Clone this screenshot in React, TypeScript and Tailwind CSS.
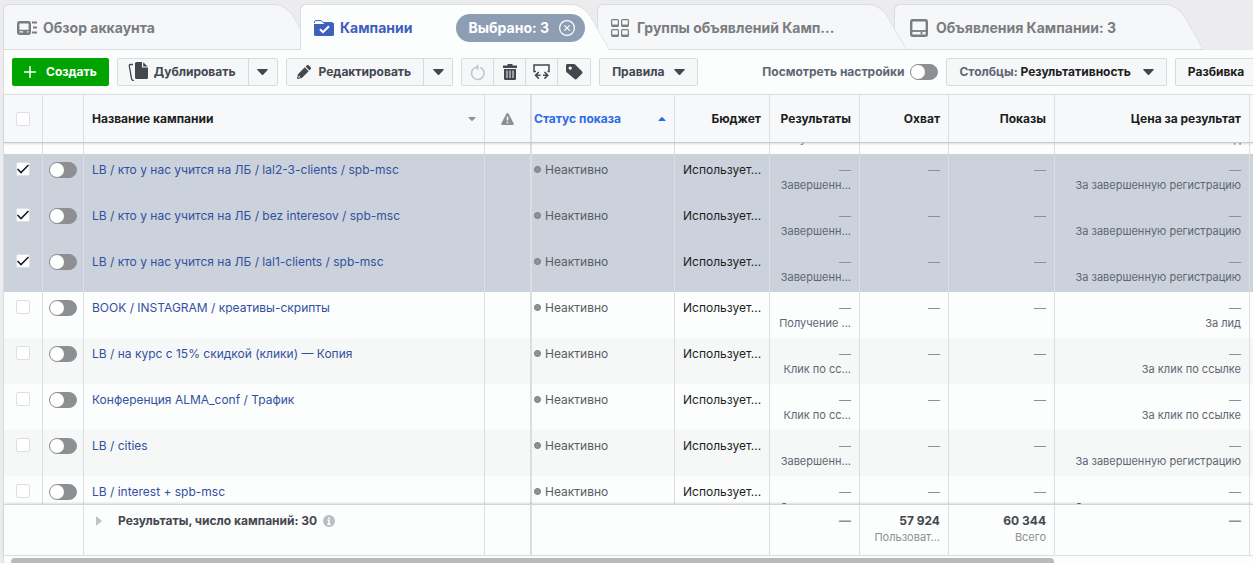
import { ReactNode, useEffect, useRef, useState } from "react";
import clsx from "clsx";

type Campaign = {
  id: number;
  name?: string;
  result: string;
  price: string;
};

const campaigns: Campaign[] = [
  { id: 1, result: "Получение ...", price: "За лид" },
  { id: 2, name: "LB / кто у нас учится на ЛБ / lal2-3-clients / spb-msc", result: "Завершенн...", price: "За завершенную регистрацию" },
  { id: 3, name: "LB / кто у нас учится на ЛБ / bez interesov / spb-msc", result: "Завершенн...", price: "За завершенную регистрацию" },
  { id: 4, name: "LB / кто у нас учится на ЛБ / lal1-clients / spb-msc", result: "Завершенн...", price: "За завершенную регистрацию" },
  { id: 5, name: "BOOK / INSTAGRAM / креативы-скрипты", result: "Получение ...", price: "За лид" },
  { id: 6, name: "LB / на курс с 15% скидкой (клики) — Копия", result: "Клик по сс...", price: "За клик по ссылке" },
  { id: 7, name: "Конференция ALMA_conf / Трафик", result: "Клик по сс...", price: "За клик по ссылке" },
  { id: 8, name: "LB / cities", result: "Завершенн...", price: "За завершенную регистрацию" },
  { id: 9, name: "LB / interest + spb-msc", result: "Завершенн...", price: "За завершенную регистрацию" },
];

/* ---------- icons ---------- */

const OverviewIcon = () => (
  <svg width="20" height="16" viewBox="0 0 20 16" fill="none" stroke="#7a7c7f" aria-hidden="true">
    <rect x="1.2" y="2.2" width="11.6" height="11.6" rx="1.5" strokeWidth="2.4" />
    <path d="M2 10.5h10M7 10.5v1.6h3" strokeWidth="1.6" />
    <path d="M15 2.500h5M16 7.500h4M15 12.500h5" strokeWidth="2" />
  </svg>
);

const FolderIcon = () => (
  <svg width="20" height="16" viewBox="0 0 20 16" aria-hidden="true">
    <path d="M.5 3V1.800C.5 1 1 .6 1.700.6h5.600L9 2.600h8.500c.6 0 1 .4 1 1" fill="none" stroke="#3f5fbc" />
    <path d="M0 4h9.500l1.200-1.500H18.500A1.500 1.500 0 0 1 20 4v10.500a1.500 1.500 0 0 1-1.500 1.500h-17A1.500 1.500 0 0 1 0 14.500z" fill="#3f5fbc" />
    <path d="M6 9.200l3 3 6-6" fill="none" stroke="#fff" strokeWidth="2" />
  </svg>
);

const GroupsIcon = () => (
  <svg width="18" height="18" viewBox="0 0 18 18" fill="none" stroke="#7a7c7f" className="mr-0.5" aria-hidden="true">
    {["0 0", "10 0", "0 10", "10 10"].map((pos) => (
      <g key={pos} transform={`translate(${pos})`}>
        <rect x=".6" y=".6" width="6.800" height="6.800" rx="1" strokeWidth="1.200" />
        <path d="M1 6.500h6" strokeWidth="1.800" />
      </g>
    ))}
  </svg>
);

const AdsIcon = () => (
  <svg width="18" height="18" viewBox="0 0 18 18" fill="none" stroke="#7a7c7f" className="mr-0.5" aria-hidden="true">
    <rect x="1.200" y="1.200" width="15.600" height="15.600" rx="1.500" strokeWidth="2.400" />
    <path d="M2 12h14" strokeWidth="1.800" />
    <path d="M11.500 13v2.500" strokeWidth="1.800" />
  </svg>
);

const CopyIcon = () => (
  <svg width="20" height="20" viewBox="0 0 20 20" fill="#43474e" aria-hidden="true">
    <path d="M5 2.500H2.500c-1 0-1.400.5-1.200 1.400l2.300 13.200c.2.900.6 1.200 1.400 1.200h1" fill="none" stroke="#43474e" strokeWidth="1.300" />
    <path d="M8.500 0H14v5.500h6v10a1.500 1.500 0 0 1-1.500 1.500h-10A1.500 1.500 0 0 1 7 15.500v-14A1.500 1.500 0 0 1 8.500 0z" />
    <path d="M15.200.2l4.500 4.300h-4.500z" />
  </svg>
);

const PencilIcon = () => (
  <svg width="14" height="14" viewBox="0 0 14 14" fill="#43474e" aria-hidden="true">
    <path
      fillRule="evenodd"
      d="M0 14l.9-4.800 6.900-6.900 3.900 3.900-6.900 6.900zM1.800 10.400l-.4 2.200 2.200-.4z"
    />
    <path d="M8.600 1.500L9.700.5c.7-.7 1.600-.7 2.300 0l1.500 1.500c.7.700.7 1.600 0 2.300l-1 1.100z" />
  </svg>
);

const ReloadIcon = () => (
  <svg width="16" height="17" viewBox="0 0 16 17" fill="none" stroke="#c3c6cb" aria-hidden="true">
    <path d="M4.800 3.600a6.300 6.300 0 1 0 5.600-.2" strokeWidth="1.600" />
    <path d="M8.500.3v6L4.500 3.300z" fill="#c3c6cb" stroke="none" />
  </svg>
);

const TrashIcon = () => (
  <svg width="14" height="16" viewBox="0 0 14 16" fill="#43474e" aria-hidden="true">
    <path d="M4.500 0h5v1.500H14V4H0V1.500h4.500z" />
    <path d="M1 5h12v9.500a1.500 1.500 0 0 1-1.500 1.500h-9A1.500 1.500 0 0 1 1 14.500z" />
    <path d="M4 6.500v7.500M7 6.500v7.500M10 6.500v7.500" stroke="#f5f6f7" />
  </svg>
);

const SwapIcon = () => (
  <svg width="17" height="16" viewBox="0 0 17 16" fill="none" stroke="#43474e" strokeWidth="1.500" aria-hidden="true">
    <path d="M3 7.500H1V1h15v6.500h-1.500" />
    <path d="M7.500 11.300H2.800M5.800 8l-3.300 3.300 3.300 3.300M10 11.300h4.700M11.500 8l3.300 3.300-3.300 3.300" />
  </svg>
);

const TagIcon = () => (
  <svg width="17" height="16" viewBox="0 0 17 16" fill="#43474e" aria-hidden="true">
    <path
      fillRule="evenodd"
      d="M1.500 0h6.300c.6 0 1 .2 1.400.5l6.700 6.700c.8.800.8 1.800 0 2.600l-5 5c-.8.800-1.800.8-2.600 0L.600 8.300C.200 7.900 0 7.500 0 6.900V1.500C0 .7.700 0 1.500 0zm2.700 2.400a1.700 1.700 0 1 0 0 3.400 1.700 1.700 0 0 0 0-3.400z"
    />
  </svg>
);

const WarningIcon = () => (
  <svg width="13" height="12" viewBox="0 0 13 12" aria-hidden="true">
    <path d="M5.500.6c.5-.8 1.500-.8 2 0l5.200 9.900c.4.800 0 1.500-.9 1.500H1.200c-.9 0-1.300-.7-.9-1.500z" fill="#8b8f94" />
    <path d="M6.500 3.500v4M6.500 8.700v1.500" stroke="#f5f7f8" strokeWidth="1.500" />
  </svg>
);

const Caret = ({ className }: { className?: string }) => (
  <svg width="11" height="6" viewBox="0 0 11 6" className={className} fill="currentColor" aria-hidden="true">
    <path d="M.8 0h9.400c.7 0 .9.500.4 1L6.200 5.700c-.4.4-1 .4-1.400 0L.4 1C-.1.500.1 0 .8 0z" />
  </svg>
);

/* ---------- controls ---------- */

function CheckBox({ label, checked, onChange }: { label: string; checked: boolean; onChange: () => void }) {
  return (
    <label className="relative mx-auto block size-3.5">
      <input
        type="checkbox"
        aria-label={label}
        checked={checked}
        onChange={onChange}
        className="peer block size-3.5 appearance-none rounded-xs border border-[#dcdfe6] bg-white"
      />
      <svg
        width="14"
        height="14"
        viewBox="0 0 14 14"
        className="pointer-events-none absolute inset-0 hidden peer-checked:block"
        aria-hidden="true"
      >
        <path d="M1.500 7l3.500 3.500 7.500-7.500" fill="none" stroke="#1c1e21" strokeWidth="1.600" />
      </svg>
    </label>
  );
}

function Toggle({ label, id }: { label?: string; id?: string }) {
  const [on, setOn] = useState<boolean>(false);
  return (
    <input
      type="checkbox"
      role="switch"
      id={id}
      aria-label={label}
      checked={on}
      onChange={() => setOn(!on)}
      className="block h-4 w-7 shrink-0 appearance-none rounded-full border border-[#8d8f92] bg-[#8d8f92] before:block before:size-3.5 before:rounded-full before:bg-white checked:bg-[#3f5fbc] checked:before:ml-3"
    />
  );
}

function ToolButton({ children, className, label }: { children: ReactNode; className?: string; label?: string }) {
  return (
    <button
      type="button"
      aria-label={label}
      className={clsx("flex h-7 shrink-0 items-center justify-center whitespace-nowrap bg-[#f6f7f8]", className)}
    >
      {children}
    </button>
  );
}

function ButtonGroup({ children }: { children: ReactNode }) {
  return (
    <div className="flex shrink-0 divide-x divide-[#d9dbe0] overflow-hidden rounded-xs border border-[#d9dbe0] *:h-[26px]">
      {children}
    </div>
  );
}

function Tab({
  icon,
  title,
  active,
  className,
  children,
}: {
  icon: ReactNode;
  title: string;
  active?: boolean;
  className?: string;
  children?: ReactNode;
}) {
  const surface = active ? "bg-[#fcfdfd]" : "bg-[#f5f7f8] border-b";
  return (
    <div className={clsx("relative flex h-[46px] w-[297px] shrink-0 items-center pt-0.5", className)}>
      <span className={clsx("absolute inset-y-0 right-6 left-0 rounded-tl-md border-t border-l border-[#d9dce0]", surface)} />
      <span className={clsx("absolute inset-y-0 right-0 w-12 skew-x-[30deg] rounded-tr-xl border-t border-r border-[#d9dce0]", surface)} />
      {/* hides the joint between the straight and the slanted part */}
      <span className={clsx("absolute inset-y-0 right-6 w-12 border-t border-[#d9dce0]", surface)} />
      <button
        type="button"
        role="tab"
        aria-selected={!!active}
        className={clsx(
          "relative flex items-center gap-1.5 pl-3.5 text-sm font-bold whitespace-nowrap",
          active ? "text-[#3f5fbc]" : "text-[#7a7c7f]"
        )}
      >
        {icon}
        {title}
      </button>
      {children}
    </div>
  );
}

/* ---------- table ---------- */

const table = "w-full table-fixed border-separate border-spacing-0";
const cell = "border-r border-[#dcdee1] px-2";
const head = "border-y border-t-[#dcdee1] border-b-[#c6c9cd] bg-[#f6f8f9] font-bold";
const foot = "border-y border-t-[#d3d3d6]";

// header, body and totals are separate tables, so they share the same columns
const Columns = () => (
  <colgroup>
    <col className="w-[39px]" />
    <col className="w-[41px]" />
    <col />
    <col className="w-[47px]" />
    <col className="w-[143px]" />
    <col className="w-[95px]" />
    <col className="w-[90px]" />
    <col className="w-[89px]" />
    <col className="w-[106px]" />
    <col className="w-[195px]" />
    <col className="w-[3px]" />
  </colgroup>
);

const Dash = () => <span className="text-[#8d9196]">—</span>;

function Row({
  campaign: { name, result, price },
  striped,
  checked,
  onToggle,
}: {
  campaign: Campaign;
  striped: boolean;
  checked: boolean;
  onToggle: () => void;
}) {
  const loaded = !!name;
  return (
    <tr
      className={clsx(
        "h-[46px] text-right align-top leading-4 *:pt-2",
        checked ? "bg-[#cbd2dc]" : striped ? "bg-[#f6f8f8]" : "bg-[#fcfdfd]"
      )}
    >
      <td className={cell}>{loaded && <CheckBox label={name} checked={checked} onChange={onToggle} />}</td>
      <td className="border-r border-[#dcdee1] pl-1.5">{loaded && <Toggle label={name} />}</td>
      <td className={clsx(cell, "truncate text-left")}>
        {loaded && (
          <a href="#" className="text-[#33509f]">
            {name}
          </a>
        )}
      </td>
      <td className={clsx(cell, "border-r-2")} />
      <td className={clsx(cell, "pl-0.5 text-left text-[#5a5d61]")}>
        {loaded && (
          <>
            <span className="mr-1 inline-block size-[7px] rounded-full border border-[#77797c] bg-[#929294] align-[1px]" />
            Неактивно
          </>
        )}
      </td>
      <td className={cell}>{loaded && "Использует..."}</td>
      <td className={cell}>
        <div className="h-4">{loaded && <Dash />}</div>
        <div className="text-[11px] leading-3.5 text-[#5f6672]">{result}</div>
      </td>
      <td className={cell}>{loaded && <Dash />}</td>
      <td className={cell}>{loaded && <Dash />}</td>
      <td className={cell}>
        <div className="h-4">{loaded && <Dash />}</div>
        <div className="text-[11px] leading-3.5 text-[#5f6672]">{price}</div>
      </td>
      <td />
    </tr>
  );
}

export default function App() {
  const [selected, setSelected] = useState<number[]>([2, 3, 4]);
  const scrollRef = useRef<HTMLDivElement>(null);

  useEffect(() => {
    scrollRef.current!.scrollTop = 35;
  }, []);

  const toggleRow = (id: number) =>
    setSelected((prev) => (prev.includes(id) ? prev.filter((item) => item !== id) : [...prev, id]));

  const toggleAll = () => setSelected((prev) => (prev.length === campaigns.length ? [] : campaigns.map((c) => c.id)));

  return (
    <div className="flex h-screen flex-col overflow-hidden bg-[#ececee] pl-[3px] font-['Inter','Liberation_Sans',sans-serif] text-xs text-[#1c1e21]">
      <div role="tablist" className="flex pt-1">
        <Tab icon={<OverviewIcon />} title="Обзор аккаунта" />
        <Tab icon={<FolderIcon />} title="Кампании" active className="z-30">
          <div className="relative mr-3 ml-auto flex h-7 items-center gap-2.5 rounded-full bg-[#8c9db4] pr-2.5 pl-3 text-sm font-bold text-white">
            <span>Выбрано: {selected.length}</span>
            <button type="button" aria-label="Сбросить выбор" onClick={() => setSelected([])}>
              <svg width="16" height="16" viewBox="0 0 16 16" fill="none" stroke="#fff" aria-hidden="true">
                <circle cx="8" cy="8" r="7.400" strokeWidth="1.200" />
                <path d="M5.300 5.300l5.400 5.400M10.700 5.300l-5.400 5.400" strokeWidth="1.200" />
              </svg>
            </button>
          </div>
        </Tab>
        <Tab icon={<GroupsIcon />} title="Группы объявлений Камп..." className="z-20" />
        <Tab icon={<AdsIcon />} title="Объявления Кампании: 3" className="z-10 pl-0.5" />
      </div>

      <div className="flex min-h-0 flex-1 flex-col border-l border-[#d9dce0] bg-[#fcfdfd]">
        <div className="flex gap-2 overflow-hidden py-2 pl-2 font-bold text-[#43474e]">
          <button type="button" className="flex h-7 shrink-0 items-center gap-2.5 rounded-xs bg-[#00a400] px-3 text-white">
            <svg width="12" height="12" viewBox="0 0 12 12" stroke="#fff" strokeWidth="1.500" aria-hidden="true">
              <path d="M6 0v12M0 6h12" />
            </svg>
            Создать
          </button>
          <ButtonGroup>
            <ToolButton className="gap-1.5 pr-3 pl-2.5">
              <CopyIcon />
              Дублировать
            </ToolButton>
            <ToolButton className="w-7" label="Другие варианты дублирования">
              <Caret />
            </ToolButton>
          </ButtonGroup>
          <ButtonGroup>
            <ToolButton className="gap-2 pr-3 pl-2.5">
              <PencilIcon />
              Редактировать
            </ToolButton>
            <ToolButton className="w-7" label="Другие варианты редактирования">
              <Caret />
            </ToolButton>
          </ButtonGroup>
          <ButtonGroup>
            <ToolButton className="w-8" label="Отменить">
              <ReloadIcon />
            </ToolButton>
            <ToolButton className="w-8" label="Удалить">
              <TrashIcon />
            </ToolButton>
            <ToolButton className="w-8" label="A/B-тест">
              <SwapIcon />
            </ToolButton>
            <ToolButton className="w-8" label="Метки">
              <TagIcon />
            </ToolButton>
          </ButtonGroup>
          <ToolButton className="gap-2.5 rounded-xs border border-[#d9dbe0] px-3">
            Правила
            <Caret />
          </ToolButton>
          <div className="ml-14 flex shrink-0 items-center gap-1.5">
            <label htmlFor="view-settings" className="whitespace-nowrap text-[#5f6672]">
              Посмотреть настройки
            </label>
            <Toggle id="view-settings" />
          </div>
          <ToolButton className="gap-3 rounded-xs border border-[#d9dbe0] px-3">
            <span>
              <span className="text-[#5f6672]">Столбцы:</span> <span className="text-[#1c1e21]">Результативность</span>
            </span>
            <Caret />
          </ToolButton>
          <ToolButton className="gap-3 rounded-xs border border-[#d9dbe0] px-3 text-[#1c1e21]">
            Разбивка
            <Caret />
          </ToolButton>
        </div>

        <table className={clsx(table, "relative z-10 shadow-[0_1px_2px_rgba(0,0,0,0.12)]")}>
          <Columns />
          <thead>
            <tr className="h-[49px] text-right">
              <th className={clsx(cell, head)}>
                <CheckBox label="Выбрать все" checked={selected.length === campaigns.length} onChange={toggleAll} />
              </th>
              <th className={clsx(cell, head)} aria-label="Вкл./выкл." />
              <th className={clsx(cell, head)}>
                <div className="flex items-center justify-between">
                  Название кампании
                  <Caret className="h-1 w-2 text-[#8d9196]" />
                </div>
              </th>
              <th className={clsx(cell, head, "border-r-2")} aria-label="Предупреждения">
                <div className="flex justify-center">
                  <WarningIcon />
                </div>
              </th>
              <th className={clsx(cell, head, "pl-0.5 text-[#2b6be8]")}>
                <div className="flex items-center justify-between">
                  Статус показа
                  <Caret className="h-1 w-2 rotate-180" />
                </div>
              </th>
              <th className={clsx(cell, head)}>Бюджет</th>
              <th className={clsx(cell, head)}>Результаты</th>
              <th className={clsx(cell, head)}>Охват</th>
              <th className={clsx(cell, head)}>Показы</th>
              <th className={clsx(cell, head)}>Цена за результат</th>
              <td className={head} />
            </tr>
          </thead>
        </table>

        <div ref={scrollRef} className="min-h-0 flex-1 overflow-hidden">
          <table className={table}>
            <Columns />
            <tbody>
              {campaigns.map((campaign, index) => (
                <Row
                  key={campaign.id}
                  campaign={campaign}
                  striped={index % 2 === 1}
                  checked={selected.includes(campaign.id)}
                  onToggle={() => toggleRow(campaign.id)}
                />
              ))}
            </tbody>
          </table>
        </div>

        <table className={clsx(table, "relative z-10 bg-[#fcfdfd] shadow-[0_-1px_2px_rgba(0,0,0,0.12)]")}>
          <Columns />
          <tbody>
            <tr className="h-[52px] text-right align-top leading-4 *:pt-2">
              <td colSpan={2} className={clsx(cell, foot)} />
              <td className={clsx(cell, foot)}>
                <div className="flex items-center pl-1 font-bold text-[#43474e]">
                  <button type="button" aria-label="Развернуть результаты" className="mr-4">
                    <svg width="6" height="10" viewBox="0 0 6 10" fill="#c0c3c7" aria-hidden="true">
                      <path d="M0 0l6 5-6 5z" />
                    </svg>
                  </button>
                  Результаты, число кампаний: 30
                  <svg width="12" height="12" viewBox="0 0 12 12" className="ml-1.5" aria-hidden="true">
                    <circle cx="6" cy="6" r="6" fill="#b9bdc4" />
                    <path d="M6 2.200v1.800M4.500 5.300H6v3.900M4.300 9.200h3.400" fill="none" stroke="#fff" strokeWidth="1.500" />
                  </svg>
                </div>
              </td>
              <td className={clsx(cell, foot, "border-r-2")} />
              <td colSpan={2} className={clsx(cell, foot)} />
              <td className={clsx(cell, foot, "font-bold")}>
                <Dash />
              </td>
              <td className={clsx(cell, foot)}>
                <div className="font-bold text-[#43474e]">57 924</div>
                <div className="text-[11px] text-[#8d9196]">Пользоват...</div>
              </td>
              <td className={clsx(cell, foot)}>
                <div className="font-bold text-[#43474e]">60 344</div>
                <div className="text-[11px] text-[#8d9196]">Всего</div>
              </td>
              <td className={clsx(cell, foot, "font-bold")}>
                <Dash />
              </td>
              <td className={clsx(foot, "border-[#dcdee1]")} />
            </tr>
          </tbody>
        </table>

        <div className="h-[7px] pt-0.5 pl-[7px]">
          <div className="h-full w-[84%] rounded-t bg-[#b9babb]" />
        </div>
      </div>
    </div>
  );
}
